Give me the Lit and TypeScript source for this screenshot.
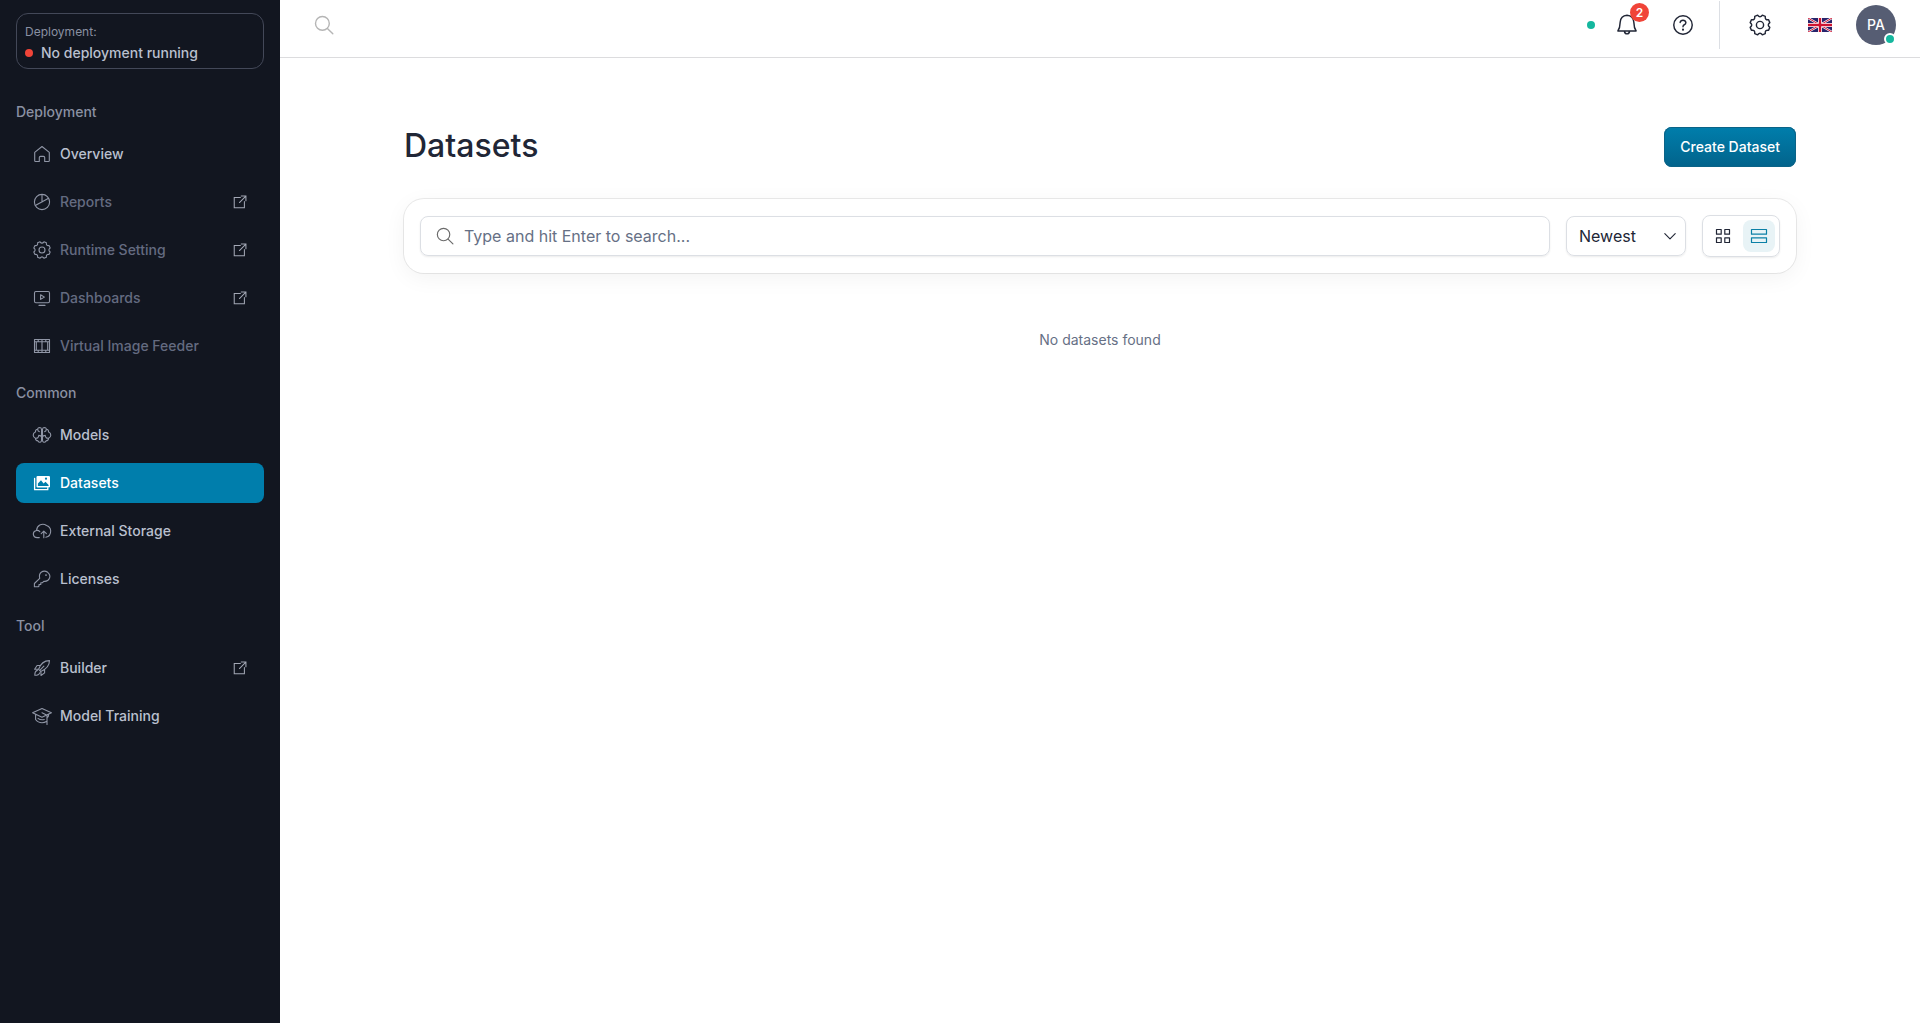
import { LitElement, html, css, svg, nothing, SVGTemplateResult } from "lit";
import { customElement, property, state } from "lit/decorators.js";
import { classMap } from "lit/directives/class-map.js";

const ICONS: Record<string, SVGTemplateResult> = {
  home: svg`<path d="M2.7 8.4 10 2.5l7.3 5.9v8.3q0 .8-.8.8h-3.8v-3.9q0-1.2-1.2-1.2h-3q-1.2 0-1.2 1.2v3.9H3.5q-.8 0-.8-.8z"/>`,
  chart: svg`<circle cx="10" cy="10" r="7.6"/><path d="M10 2.5V10M3.3 13.6 16.6 6.3"/>`,
  gear: svg`<path d="M8.04 1.83Q10 4.4 11.96 1.83L14.39 2.84Q13.96 6.04 17.16 5.61L18.17 8.04Q15.6 10 18.17 11.96L17.16 14.39Q13.96 13.96 14.39 17.16L11.96 18.17Q10 15.6 8.04 18.17L5.61 17.16Q6.04 13.96 2.84 14.39L1.83 11.96Q4.4 10 1.83 8.04L2.84 5.61Q6.04 6.04 5.61 2.84Z"/><circle cx="10" cy="10" r="3"/>`,
  screen: svg`<rect x="2.5" y="3.5" width="15" height="11.2" rx="1.4"/><path d="M8.6 6.8v4.6l3.8-2.3zM7 17.4h6"/>`,
  film: svg`<path d="M2.5 3.5h15v13h-15zM2.5 5.8h15M2.5 14.2h15M10 3.5v13M6.2 3.5v2.3M13.8 3.5v2.3M6.2 14.2v2.3M13.8 14.2v2.3M4.300 5.800v8.400M15.700 5.800v8.400"/>`,
  brain: svg`<path d="M9.500 4.300Q9.300 2.500 7.600 2.500 6 2.600 5.600 4.200 3.300 4.300 3.400 6.900 1.100 7.900 1.200 10.200q.2 2.300 2.200 3 .1 2.500 2.600 2.700.8 1.600 2.200 1.300 1.300-.4 1.300-2zM10.500 4.300q.2-1.800 1.900-1.800 1.600.1 2 1.700 2.300.1 2.200 2.700 2.300 1 2.200 3.300-.2 2.300-2.200 3-.1 2.500-2.600 2.700-.8 1.600-2.200 1.300-1.300-.4-1.300-2z"/><path d="M5.700 4.300q0 2 1.600 2.300M14.300 4.300q0 2-1.600 2.300M3.600 13.200q2.900.2 3-2.400M16.400 13.200q-2.900.2-3-2.400M6.800 10.400q2.200 0 2.700 1.600M13.200 10.400q-2.200 0-2.700 1.600"/>`,
  images: svg`<path d="M2.600 5.500v11.200h13.200v-2" stroke-width="1.3"/><rect x="4.500" y="2.900" width="13.500" height="11.500" rx="1.200" fill="currentColor" stroke="none"/><path d="M5.900 13v-2.400l3.100-3.300 2.600 3.100 1.900-1.600 3.100 3.100V13z" fill="#007eac" stroke="none"/><circle cx="14" cy="5.700" r="1.100" fill="#007eac" stroke="none"/>`,
  cloud: svg`<path d="M7.300 16.600H5.200q-3.500-.2-3.900-3.500.1-3 3.200-3.600Q4.900 5.600 7.800 4q3.700-1.700 6.700.5 3.700 1 4.200 5.200.1 5.600-4.900 6.500M11.800 16.800v-6.400M9.200 12.700l2.600-2.600 2.600 2.600"/><path d="M4.500 9.500q2-.4 3.300 1.200"/>`,
  key: svg`<path d="M7.700 9.300Q6.700 5.100 9.200 3.200q3.200-2.100 6.500.1 3.100 2.600 1.800 6-1.700 3.600-5.700 3L10.500 13.700H8.800v1.800H7v1.500l-.8.800H2.400v-3.300z"/><circle cx="14" cy="6.100" r=".9" fill="currentColor" stroke="none"/>`,
  rocket: svg`<path d="M6.600 11.300Q9.500 2.700 17.500 2.600 17.500 9.800 8.800 13.500zM7.900 7.500H5.100L2.600 11.200l3.800-.2M12.600 11.700v3.200L9 17.500l-.1-4M5.400 12.400q-2.600.6-2.600 4.900 4.100 0 4.900-2.500"/><path d="m8.500 11.600 3.400-3.400"/>`,
  cap: svg`<path d="M10 2.500 19.400 6.700 10 11.300.6 6.700zM3.600 8.600v4.900q2.300 3.200 6.400 3.200 2.600 0 4.400-1.200M10 6.800l5 2.400v9.300M15 11.700q1.600-.5 1.700-3.200M6 12.300q2.300 1.900 6.300 1.200"/>`,
  external: svg`<path d="M10.500 4.500H2.800v12.700h12.700V9.500M11.500 2.600h5.900v5.900M17 3 9.300 10.700"/>`,
  search: svg`<circle cx="8.400" cy="8.400" r="6.900"/><path d="m13.400 13.400 5.400 5.400"/>`,
  bell: svg`<path d="M10 1.900q5.300.3 5.700 5.900.1 4.600 1.900 7.200H2.400q1.800-2.600 1.900-7.200Q4.700 2.200 10 1.900zM7.800 15.200q.5 2.200 2.200 2.200t2.200-2.200"/>`,
  help: svg`<circle cx="10" cy="10" r="7.700"/><path d="M7.600 7.900q.3-1.900 2.400-1.900t2.400 1.900q0 1.300-1.300 1.900-1.100.5-1.100 1.600"/><circle cx="10" cy="13.900" r=".9" fill="currentColor" stroke="none"/>`,
  chevron: svg`<path d="m3.500 7 6.500 6.500L16.500 7"/>`,
  grid: svg`<path d="M3.500 3.500h4.700v4.700H3.500zM11.800 3.500h4.700v4.700h-4.700zM3.500 11.800h4.700v4.700H3.500zM11.800 11.800h4.700v4.700h-4.700z"/>`,
  rows: svg`<path d="M2.500 3.500h15v4.700h-15zM2.500 11.800h15v4.700h-15z"/>`,
};

const icon = (name: string, cls: string) =>
  html`<svg class=${"icon " + cls} viewBox="0 0 20 20" aria-hidden="true">${ICONS[name]}</svg>`;

const iconStyles = css`
  .icon {
    display: block;
    flex: none;
    width: 20px;
    height: 20px;
    fill: none;
    stroke: currentColor;
    stroke-width: 1.1;
    stroke-linejoin: round;
    stroke-linecap: round;
  }
`;

interface NavItem {
  label: string;
  icon: string;
  muted?: boolean;
  external?: boolean;
}

const NAV: { title: string; items: NavItem[] }[] = [
  {
    title: "Deployment",
    items: [
      { label: "Overview", icon: "home" },
      { label: "Reports", icon: "chart", muted: true, external: true },
      { label: "Runtime Setting", icon: "gear", muted: true, external: true },
      { label: "Dashboards", icon: "screen", muted: true, external: true },
      { label: "Virtual Image Feeder", icon: "film", muted: true },
    ],
  },
  {
    title: "Common",
    items: [
      { label: "Models", icon: "brain" },
      { label: "Datasets", icon: "images" },
      { label: "External Storage", icon: "cloud" },
      { label: "Licenses", icon: "key" },
    ],
  },
  {
    title: "Tool",
    items: [
      { label: "Builder", icon: "rocket", external: true },
      { label: "Model Training", icon: "cap" },
    ],
  },
];

@customElement("side-nav")
export class SideNav extends LitElement {
  @property() current = "";

  static styles = [
    iconStyles,
    css`
      :host {
        display: block;
        box-sizing: border-box;
        padding: 13px 16px;
        background: #121620;
        color: #bac0cf;
        font-size: 14px;
        line-height: 22px;
      }
      .status {
        display: block;
        box-sizing: border-box;
        width: 100%;
        padding: 8px 8px 4px;
        border: 1px solid #434858;
        border-radius: 12px;
        background: none;
        color: inherit;
        font: inherit;
        text-align: left;
      }
      .caption {
        display: block;
        font-size: 12px;
        line-height: 20px;
        color: #8a90a2;
      }
      .state {
        display: flex;
        align-items: center;
        gap: 8px;
        line-height: 22px;
        font-weight: 500;
      }
      .dot {
        width: 8px;
        height: 8px;
        border-radius: 50%;
        background: #f04438;
      }
      .nav {
        display: flex;
        flex-direction: column;
        gap: 16px;
        margin-top: 32px;
      }
      .title {
        margin: 0 0 11px;
        font-size: 14px;
        font-weight: 500;
        color: #8a90a2;
      }
      .list {
        display: flex;
        flex-direction: column;
        gap: 8px;
        margin: 0;
        padding: 0;
        list-style: none;
      }
      .link {
        display: flex;
        align-items: center;
        gap: 8px;
        height: 40px;
        padding: 0 16px;
        border-radius: 8px;
        color: inherit;
        font-weight: 500;
        text-decoration: none;
      }
      .label {
        flex: 1;
      }
      .glyph {
        color: #9096a6;
      }
      .muted {
        color: #646b80;
      }
      .active {
        background: #007eac;
        color: #fff;
      }
      .active .glyph {
        color: #fff;
      }
      .out {
        width: 16px;
        height: 16px;
        color: #a3a8b5;
        stroke-linejoin: miter;
        stroke-width: 1.3;
      }
    `,
  ];

  render() {
    return html`
      <button class="status" type="button">
        <span class="caption">Deployment:</span>
        <span class="state"><span class="dot"></span>No deployment running</span>
      </button>
      <nav class="nav">
        ${NAV.map(
          (group) => html`<section>
            <h2 class="title">${group.title}</h2>
            <ul class="list">
              ${group.items.map((item) => this.renderItem(item))}
            </ul>
          </section>`
        )}
      </nav>
    `;
  }

  private renderItem(item: NavItem) {
    const active = item.label === this.current;
    return html`<li>
      <a
        href="#"
        class=${classMap({ link: true, muted: !!item.muted, active })}
        aria-current=${active ? "page" : nothing}
      >
        ${icon(item.icon, "glyph")}<span class="label">${item.label}</span>
        ${item.external ? icon("external", "out") : nothing}
      </a>
    </li>`;
  }
}

@customElement("top-bar")
export class TopBar extends LitElement {
  static styles = [
    iconStyles,
    css`
      :host {
        display: flex;
        align-items: flex-start;
        justify-content: space-between;
        box-sizing: border-box;
        height: 58px;
        padding: 0 24px;
        border-bottom: 1px solid #dcdcde;
        color: #212636;
      }
      .tools {
        display: flex;
        align-items: center;
        gap: 12px;
        height: 50px;
      }
      .group {
        display: flex;
        align-items: center;
        gap: 16px;
      }
      .tool {
        display: grid;
        place-items: center;
        position: relative;
        width: 40px;
        height: 40px;
        padding: 0;
        border: 0;
        background: none;
        color: inherit;
      }
      .wide {
        width: 48px;
      }
      .large {
        width: 24px;
        height: 24px;
        stroke-width: 1.2;
      }
      .find {
        color: #b5b5b5;
        stroke-width: 1.4;
      }
      .dot {
        width: 8px;
        height: 8px;
        border-radius: 50%;
        background: #15b79e;
      }
      .badge {
        position: absolute;
        top: -2px;
        right: -2px;
        width: 19px;
        height: 19px;
        border-radius: 50%;
        background: #f04438;
        color: #fff;
        font: 600 12px/19px Inter, sans-serif;
      }
      .rule {
        width: 1px;
        height: 48px;
        background: #dcdfe4;
      }
      .flag {
        display: block;
        width: 24px;
        height: 14px;
      }
      .avatar {
        position: relative;
        width: 40px;
        height: 40px;
        padding: 0;
        border: 0;
        border-radius: 50%;
        background: #565d73;
        color: #fff;
        font: 500 14px/40px Inter, sans-serif;
      }
      .online {
        position: absolute;
        right: 0;
        bottom: 0;
        width: 8px;
        height: 8px;
        border: 2px solid #fff;
        border-radius: 50%;
        background: #15b79e;
      }
    `,
  ];

  render() {
    return html`
      <div class="tools">
        <button class="tool" type="button" aria-label="Search">${icon("search", "find")}</button>
      </div>
      <div class="tools">
        <span class="dot"></span>
        <div class="group">
          <button class="tool" type="button" aria-label="Notifications">
            ${icon("bell", "large")}<span class="badge">2</span>
          </button>
          <button class="tool" type="button" aria-label="Help">${icon("help", "large")}</button>
          <span class="rule"></span>
          <button class="tool wide" type="button" aria-label="Settings">
            ${icon("gear", "large")}
          </button>
        </div>
        <button class="tool wide" type="button" aria-label="Language">
          <svg class="flag" viewBox="0 0 24 14" aria-hidden="true">
            <path fill="#28246b" d="M0 0h24v14H0z" />
            <path d="m0 0 24 14M24 0 0 14" stroke="#fff" stroke-width="2.2" />
            <path d="m0 0 24 14M24 0 0 14" stroke="#cf1430" stroke-width="1" />
            <path d="M12 0v14M0 7h24" stroke="#fff" stroke-width="4" />
            <path d="M12 0v14M0 7h24" stroke="#cf1430" stroke-width="2.400" />
          </svg>
        </button>
        <button class="avatar" type="button">PA<span class="online"></span></button>
      </div>
    `;
  }
}

@customElement("dataset-page")
export class DatasetPage extends LitElement {
  @state() private view = "rows";

  static styles = [
    iconStyles,
    css`
      :host {
        display: block;
        box-sizing: border-box;
        width: 100%;
        max-width: 1440px;
        margin: 0 auto;
        padding: 69px 24px 64px;
        color: #212636;
      }
      .head {
        display: flex;
        align-items: flex-start;
        justify-content: space-between;
        margin-bottom: 32px;
      }
      .heading {
        margin: 0;
        font-size: 32px;
        line-height: 38px;
        font-weight: 500;
      }
      .create {
        height: 40px;
        padding: 0 16px;
        border: 0;
        border-radius: 8px;
        background: linear-gradient(#007eac, #02638b);
        box-shadow: inset 0 0 0 1px #0b6387, inset 0 2px 0 -1px #2390b8;
        color: #fff;
        font: 500 14px/22px Inter, sans-serif;
      }
      .bar {
        display: flex;
        align-items: center;
        gap: 16px;
        padding: 16px;
        border-radius: 20px;
        background: #fff;
        box-shadow: 0 0 0 1px rgba(0, 0, 0, 0.08), 0 5px 22px rgba(0, 0, 0, 0.05);
      }
      .field {
        display: flex;
        align-items: center;
        box-sizing: border-box;
        height: 40px;
        border: 1px solid #dcdfe4;
        border-radius: 8px;
        box-shadow: 0 1px 2px rgba(0, 0, 0, 0.08);
      }
      .search {
        flex: 1;
        gap: 10px;
        padding: 0 15px;
      }
      .lens {
        width: 18px;
        height: 18px;
        color: #6b6b6b;
        stroke-width: 1.3;
      }
      .input {
        flex: 1;
        min-width: 0;
        padding: 0;
        border: 0;
        outline: 0;
        background: none;
        color: inherit;
        font: 16px/24px Inter, sans-serif;
      }
      .input::placeholder {
        color: #667085;
        opacity: 1;
      }
      .sort {
        display: grid;
        width: 120px;
      }
      .select {
        grid-area: 1 / 1;
        height: 38px;
        padding: 0 32px 0 12px;
        border: 0;
        appearance: none;
        background: none;
        color: inherit;
        font: 16px/24px Inter, sans-serif;
      }
      .arrow {
        grid-area: 1 / 1;
        justify-self: end;
        width: 16px;
        height: 16px;
        margin-right: 7px;
        stroke-width: 1.4;
        pointer-events: none;
      }
      .views {
        display: flex;
        gap: 4px;
        padding: 4px;
        border: 1px solid #dcdfe4;
        border-radius: 8px;
        box-shadow: 0 1px 2px rgba(0, 0, 0, 0.08);
      }
      .view {
        display: grid;
        place-items: center;
        width: 32px;
        height: 32px;
        padding: 0;
        border: 0;
        border-radius: 8px;
        background: none;
        color: #212636;
      }
      .view .icon {
        stroke-width: 1.2;
      }
      .view.on {
        background: #e8f3f6;
        color: #0b80a6;
      }
      .empty {
        margin: 56px 0 0;
        color: #667085;
        font-size: 14px;
        line-height: 22px;
        text-align: center;
      }
    `,
  ];

  private renderView(name: string, label: string) {
    const on = this.view === name;
    return html`<button
      type="button"
      class=${classMap({ view: true, on })}
      aria-label=${label}
      aria-pressed=${on}
      @click=${() => (this.view = name)}
    >
      ${icon(name, "")}
    </button>`;
  }

  render() {
    return html`
      <div class="head">
        <h1 class="heading">Datasets</h1>
        <button class="create" type="button">Create Dataset</button>
      </div>
      <div class="bar">
        <label class="field search">
          ${icon("search", "lens")}
          <input
            class="input"
            type="text"
            aria-label="Search datasets"
            placeholder="Type and hit Enter to search..."
          />
        </label>
        <label class="field sort">
          <select class="select" aria-label="Sort">
            <option>Newest</option>
          </select>
          ${icon("chevron", "arrow")}
        </label>
        <div class="views">
          ${this.renderView("grid", "Grid view")} ${this.renderView("rows", "List view")}
        </div>
      </div>
      <p class="empty">No datasets found</p>
    `;
  }
}

@customElement("app-root")
export class AppRoot extends LitElement {
  static styles = css`
    :host {
      display: grid;
      grid-template-columns: 280px 1fr;
      min-height: 100vh;
      background: #fff;
      font-family: Inter, sans-serif;
    }
    .main {
      display: flex;
      flex-direction: column;
      min-width: 0;
    }
  `;

  render() {
    return html`
      <side-nav current="Datasets"></side-nav>
      <div class="main">
        <top-bar></top-bar>
        <main><dataset-page></dataset-page></main>
      </div>
    `;
  }
}
